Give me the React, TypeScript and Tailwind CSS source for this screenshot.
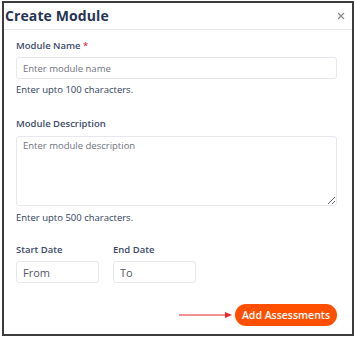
import React from 'react';

const App: React.FC = () => {
  return (
    <div className="w-[355px] h-[339px] bg-white pt-[1px] pl-[2px]" style={{ fontFamily: '"Open Sans", sans-serif' }}>
      <div className="w-[352px] h-[335px] border-2 border-[#3c3c3c] bg-white flex flex-col">
        {/* Header */}
        <div className="h-[27px] flex items-start justify-between pt-[5px] pl-[1px] pr-[7px] border-b border-[#e6e8ee]">
          <h2 className="text-[14px] font-bold text-[#263553] leading-[16px] tracking-[0.1px]">Create Module</h2>
          <svg width="8" height="8" viewBox="0 0 8 8" className="mt-[4px]">
            <path d="M1 1L7 7M7 1L1 7" stroke="#8a8a8a" strokeWidth="1.3" />
          </svg>
        </div>

        {/* Body */}
        <div className="pl-[12px] pr-[15px] flex flex-col">
          <label className="mt-[9px] text-[9.5px] leading-[14px] font-semibold text-[#3d4b69]">
            Module Name <span className="text-[#e8334a]">*</span>
          </label>
          <input
            className="mt-[4px] h-[22px] border border-[#e6e8ee] rounded-[3px] px-[6px] text-[9.5px] placeholder:text-[#6f7380] outline-none"
            placeholder="Enter module name"
          />
          <p className="mt-[4px] text-[9.5px] leading-[14px] text-[#2f3e5c]">Enter upto 100 characters.</p>

          <label className="mt-[20px] text-[9.5px] leading-[14px] font-semibold text-[#3d4b69]">Module Description</label>
          <textarea
            className="mt-[5px] h-[70px] border border-[#e6e8ee] rounded-[3px] px-[6px] py-[2px] text-[9.5px] placeholder:text-[#6f7380] outline-none"
            placeholder="Enter module description"
          />
          <p className="mt-[5px] text-[9.5px] leading-[14px] text-[#2f3e5c]">Enter upto 500 characters.</p>

          <div className="mt-[18px] flex gap-[14px]">
            <div className="flex flex-col w-[83px]">
              <label className="text-[9.5px] leading-[14px] font-semibold text-[#3d4b69]">Start Date</label>
              <input
                className="mt-[4px] h-[22px] border border-[#e6e8ee] rounded-[3px] px-[6px] text-[11px] placeholder:text-[#55585f] outline-none"
                placeholder="From"
              />
            </div>
            <div className="flex flex-col w-[83px]">
              <label className="text-[9.5px] leading-[14px] font-semibold text-[#3d4b69]">End Date</label>
              <input
                className="mt-[4px] h-[22px] border border-[#e6e8ee] rounded-[3px] px-[6px] text-[11px] placeholder:text-[#55585f] outline-none"
                placeholder="To"
              />
            </div>
          </div>

          <div className="mt-[21px] flex items-center justify-end gap-[2px]">
            <svg width="54" height="8" viewBox="0 0 54 8">
              <path d="M0 4H47" stroke="#e8262b" strokeWidth="1.2" />
              <path d="M46 1L53 4L46 7Z" fill="#e8262b" />
            </svg>
            <button className="h-[22px] w-[102px] rounded-full bg-[#fe5000] text-white text-[10.5px] font-semibold leading-none">
              Add Assessments
            </button>
          </div>
        </div>
      </div>
    </div>
  );
};

export default App;
